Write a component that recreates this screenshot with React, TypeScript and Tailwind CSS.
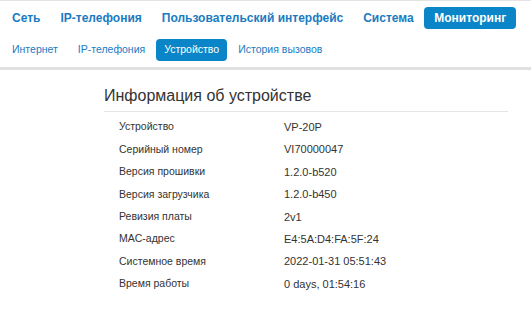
import React from "react";

const mainTabs = ["Сеть", "IP-телефония", "Пользовательский интерфейс", "Система", "Мониторинг"];
const subTabs = ["Интернет", "IP-телефония", "Устройство", "История вызовов"];

const rows: [string, string][] = [
  ["Устройство", "VP-20P"],
  ["Серийный номер", "VI70000047"],
  ["Версия прошивки", "1.2.0-b520"],
  ["Версия загрузчика", "1.2.0-b450"],
  ["Ревизия платы", "2v1"],
  ["MAC-адрес", "E4:5A:D4:FA:5F:24"],
  ["Системное время", "2022-01-31 05:51:43"],
  ["Время работы", "0 days, 01:54:16"],
];

export default function App() {
  return (
    <div className="w-[531px] h-[309px] bg-white font-['Liberation_Sans',Arial,sans-serif] overflow-hidden whitespace-nowrap">
      <div className="border-t border-[#e3e3e3]" />
      {/* top level menu */}
      <nav className="flex items-center pl-[2px] pt-[5px] h-[28px]">
        {mainTabs.map((t) => (
          <span
            key={t}
            className={
              t === "Мониторинг"
                ? "h-[22px] flex items-center px-[10px] ml-[0.5px] rounded-[4px] bg-[#0a85c7] text-white text-[12px] font-bold"
                : "px-[10px] text-[12px] font-bold text-[#1a7bc1]"
            }
          >
            {t}
          </span>
        ))}
      </nav>
      {/* section menu */}
      <nav className="flex items-center pl-[2px] mt-[10px] h-[22px]">
        {subTabs.map((t) => (
          <span
            key={t}
            className={
              t === "Устройство"
                ? "h-[22px] flex items-center px-[8px] mx-[1px] rounded-[4px] bg-[#0a85c7] text-white text-[10.5px]"
                : "px-[10px] text-[10.5px] text-[#1a7bc1]"
            }
          >
            {t}
          </span>
        ))}
      </nav>
      <div className="mt-[6px] h-[3px] bg-[#e0e0e0]" />
      <section className="ml-[104px] w-[404px] mt-[16px]">
        <h2 className="text-[16px] leading-[20px] text-[#333] pb-[5px] border-b border-[#e5e5e5]">
          Информация об устройстве
        </h2>
        <div className="mt-[4px] pl-[15px]">
          {rows.map(([k, v]) => (
            <div key={k} className="flex items-center h-[22.43px] text-[#333]">
              <span className="w-[165px] text-[10.5px]">{k}</span>
              <span className="text-[11px]">{v}</span>
            </div>
          ))}
        </div>
      </section>
    </div>
  );
}
